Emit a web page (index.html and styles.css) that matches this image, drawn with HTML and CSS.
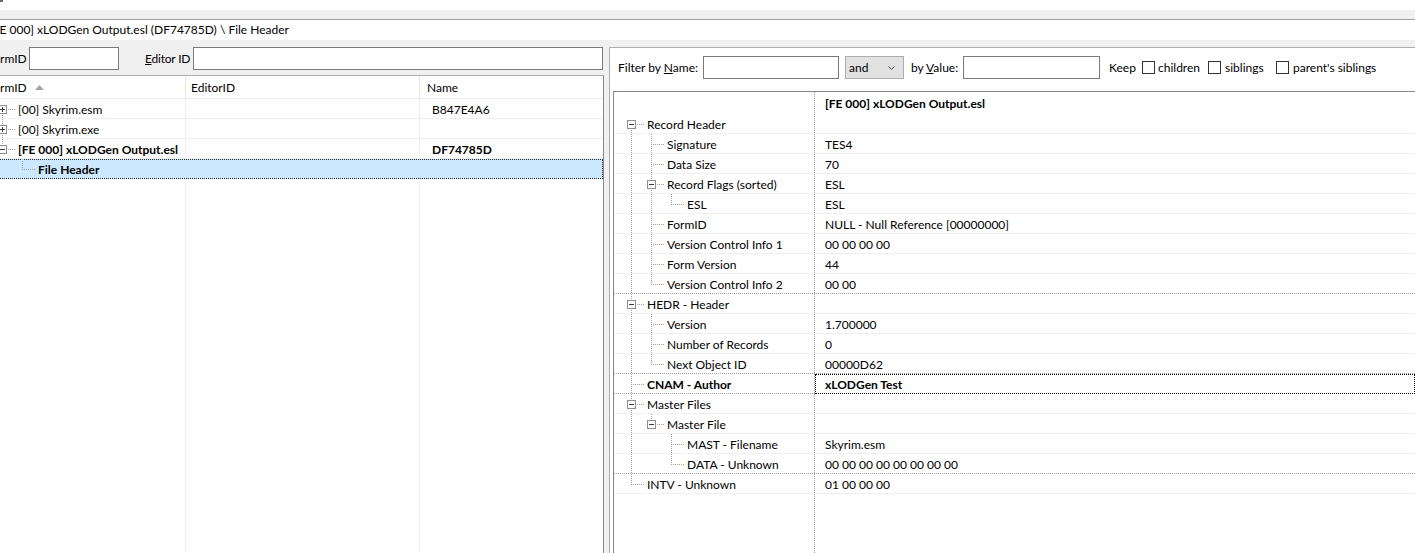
FILE: index.html
```html
<!DOCTYPE html>
<html>
<head>
<meta charset="utf-8">
<title>xEdit</title>
<link rel="stylesheet" href="styles.css">
</head>
<body>
<div class="topstrip"><span class="mark"></span></div>
<div class="band"></div>
<div class="crumb">[FE 000] xLODGen Output.esl (DF74785D) \ File Header</div>
<div class="main">
  <div class="left">
    <div class="lfilter">
      <span class="lbl lbl1"><u>F</u>ormID</span><span class="edit e-formid"></span>
      <span class="lbl lbl2"><u>E</u>ditor ID</span><span class="edit e-eid"></span>
    </div>
    <div class="ltree">
      <div class="lhead">
        <div class="h1">FormID <svg class="sort" width="9" height="5" viewBox="0 0 9 5"><polygon points="0,5 4.5,0 9,5" fill="#a6a6a6"/></svg></div>
        <div class="h2">EditorID</div>
        <div class="h3">Name</div>
      </div>
      <div class="lbody">
        <div class="lrow">
          <div class="nm"><span class="ind f"><svg class="box" width="9" height="9" viewBox="0 0 9 9"><rect x="0.5" y="0.5" width="8" height="8" fill="#fff" stroke="#8f8f8f"/><path d="M2 4.5H7M4.5 2V7" stroke="#3c3c3c"/></svg></span><span class="txt">[00] Skyrim.esm</span></div>
          <div class="c2"></div>
          <div class="c3">B847E4A6</div>
        </div>
        <div class="lrow">
          <div class="nm"><span class="ind t"><svg class="box" width="9" height="9" viewBox="0 0 9 9"><rect x="0.5" y="0.5" width="8" height="8" fill="#fff" stroke="#8f8f8f"/><path d="M2 4.5H7M4.5 2V7" stroke="#3c3c3c"/></svg></span><span class="txt">[00] Skyrim.exe</span></div>
          <div class="c2"></div>
          <div class="c3"></div>
        </div>
        <div class="lrow b">
          <div class="nm"><span class="ind l"><svg class="box" width="9" height="9" viewBox="0 0 9 9"><rect x="0.5" y="0.5" width="8" height="8" fill="#fff" stroke="#8f8f8f"/><path d="M2 4.5H7" stroke="#3c3c3c"/></svg></span><span class="txt">[FE 000] xLODGen Output.esl</span></div>
          <div class="c2"></div>
          <div class="c3">DF74785D</div>
        </div>
        <div class="lrow b sel">
          <div class="nm"><span class="ind e"></span><span class="ind l"></span><span class="txt">File Header</span></div>
          <div class="c2"></div>
          <div class="c3"></div>
        </div>
      </div>
    </div>
  </div>
  <div class="splitter"></div>
  <div class="right">
    <div class="rfilter">
      <span class="rl rl1">Filter by <u>N</u>ame:</span>
      <span class="edit e-name"></span>
      <span class="combo">and<svg class="chev" width="7" height="4" viewBox="0 0 7 4"><polyline points="0.5,0.5 3.5,3.5 6.5,0.5" fill="none" stroke="#404040"/></svg></span>
      <span class="rl rl2">by <u>V</u>alue:</span>
      <span class="edit e-value"></span>
      <span class="rl rl3">Keep</span>
      <span class="cb"></span><span class="rl rl4">children</span>
      <span class="cb"></span><span class="rl rl5">siblings</span>
      <span class="cb"></span><span class="rl rl6">parent's siblings</span>
    </div>
    <div class="rtree">
      <div class="rhead"><div class="nm"></div><div class="val">[FE 000] xLODGen Output.esl</div></div>

      <div class="row"><div class="nm"><span class="ind f"><svg class="box" width="9" height="9" viewBox="0 0 9 9"><rect x="0.5" y="0.5" width="8" height="8" fill="#fff" stroke="#8f8f8f"/><path d="M2 4.5H7" stroke="#3c3c3c"/></svg></span><span class="txt">Record Header</span></div><div class="val"></div></div>
      <div class="row"><div class="nm"><span class="ind v"></span><span class="ind t"></span><span class="txt">Signature</span></div><div class="val">TES4</div></div>
      <div class="row"><div class="nm"><span class="ind v"></span><span class="ind t"></span><span class="txt">Data Size</span></div><div class="val">70</div></div>
      <div class="row"><div class="nm"><span class="ind v"></span><span class="ind t"><svg class="box" width="9" height="9" viewBox="0 0 9 9"><rect x="0.5" y="0.5" width="8" height="8" fill="#fff" stroke="#8f8f8f"/><path d="M2 4.5H7" stroke="#3c3c3c"/></svg></span><span class="txt">Record Flags (sorted)</span></div><div class="val">ESL</div></div>
      <div class="row"><div class="nm"><span class="ind v"></span><span class="ind v"></span><span class="ind l"></span><span class="txt">ESL</span></div><div class="val">ESL</div></div>
      <div class="row"><div class="nm"><span class="ind v"></span><span class="ind t"></span><span class="txt">FormID</span></div><div class="val">NULL - Null Reference [00000000]</div></div>
      <div class="row"><div class="nm"><span class="ind v"></span><span class="ind t"></span><span class="txt">Version Control Info 1</span></div><div class="val">00 00 00 00</div></div>
      <div class="row"><div class="nm"><span class="ind v"></span><span class="ind t"></span><span class="txt">Form Version</span></div><div class="val">44</div></div>
      <div class="row dl"><div class="nm"><span class="ind v"></span><span class="ind l"></span><span class="txt">Version Control Info 2</span></div><div class="val">00 00</div></div>

      <div class="row"><div class="nm"><span class="ind t"><svg class="box" width="9" height="9" viewBox="0 0 9 9"><rect x="0.5" y="0.5" width="8" height="8" fill="#fff" stroke="#8f8f8f"/><path d="M2 4.5H7" stroke="#3c3c3c"/></svg></span><span class="txt">HEDR - Header</span></div><div class="val"></div></div>
      <div class="row"><div class="nm"><span class="ind v"></span><span class="ind t"></span><span class="txt">Version</span></div><div class="val">1.700000</div></div>
      <div class="row"><div class="nm"><span class="ind v"></span><span class="ind t"></span><span class="txt">Number of Records</span></div><div class="val">0</div></div>
      <div class="row dl"><div class="nm"><span class="ind v"></span><span class="ind l"></span><span class="txt">Next Object ID</span></div><div class="val">00000D62</div></div>

      <div class="row dl b"><div class="nm"><span class="ind t"></span><span class="txt">CNAM - Author</span></div><div class="val focus">xLODGen Test</div></div>

      <div class="row"><div class="nm"><span class="ind t"><svg class="box" width="9" height="9" viewBox="0 0 9 9"><rect x="0.5" y="0.5" width="8" height="8" fill="#fff" stroke="#8f8f8f"/><path d="M2 4.5H7" stroke="#3c3c3c"/></svg></span><span class="txt">Master Files</span></div><div class="val"></div></div>
      <div class="row"><div class="nm"><span class="ind v"></span><span class="ind l"><svg class="box" width="9" height="9" viewBox="0 0 9 9"><rect x="0.5" y="0.5" width="8" height="8" fill="#fff" stroke="#8f8f8f"/><path d="M2 4.5H7" stroke="#3c3c3c"/></svg></span><span class="txt">Master File</span></div><div class="val"></div></div>
      <div class="row"><div class="nm"><span class="ind v"></span><span class="ind e"></span><span class="ind t"></span><span class="txt">MAST - Filename</span></div><div class="val">Skyrim.esm</div></div>
      <div class="row dl"><div class="nm"><span class="ind v"></span><span class="ind e"></span><span class="ind l"></span><span class="txt">DATA - Unknown</span></div><div class="val">00 00 00 00 00 00 00 00</div></div>

      <div class="row"><div class="nm"><span class="ind l"></span><span class="txt">INTV - Unknown</span></div><div class="val">01 00 00 00</div></div>
    </div>
  </div>
</div>
</body>
</html>
```
FILE: styles.css
```css
* { box-sizing: border-box; }
html, body { margin: 0; padding: 0; }
body {
  width: 1415px;
  height: 553px;
  overflow: hidden;
  background: #fff;
  font-family: Lato, "Noto Sans", sans-serif;
  font-size: 12px;
  color: #000;
}
u { text-decoration: underline; text-underline-offset: 1px; }

.topstrip { height: 10px; background: #fff; }
.mark { display: block; width: 3px; height: 2px; background: #6a6a6a; }
.band { height: 10px; background: #f0f0f0; border-bottom: 1px solid #a0a0a0; }
.crumb {
  height: 20px;
  line-height: 19px;
  background: #fff;
  white-space: nowrap;
  text-indent: -11px;
}

.main { display: flex; height: 513px; background: #f0f0f0; }

/* left pane */
.left {
  margin-left: -20px;
  width: 624px;
  flex: none;
  display: flex;
  flex-direction: column;
}
.lfilter { height: 35px; display: flex; align-items: flex-start; padding-top: 7px; }
.lbl { height: 23px; line-height: 23px; white-space: nowrap; }
.lbl1 { width: 49px; padding-left: 7px; }
.lbl2 { width: 48px; margin-left: 26px; letter-spacing: -0.2px; }
.edit { height: 23px; background: #fff; border: 1px solid #7a7a7a; flex: none; }
.e-formid { width: 90px; }
.e-eid { width: 410px; }

.ltree {
  flex: 1;
  background: #fff;
  border-top: 1px solid #adadad;
  border-right: 1px solid #828790;
  display: flex;
  flex-direction: column;
}
.lhead { display: flex; height: 23px; border-bottom: 1px solid #ececec; }
.lhead > div { line-height: 24px; border-right: 1px solid #e5e5e5; white-space: nowrap; }
.h1 { width: 206px; padding-left: 7px; }
.h2 { width: 234px; padding-left: 5px; }
.h3 { flex: 1; padding-left: 7px; border-right: none !important; }
.sort { margin-left: 5px; vertical-align: 2px; }

.lbody {
  flex: 1;
  background-image:
    linear-gradient(#efefef, #efefef),
    linear-gradient(#efefef, #efefef);
  background-size: 1px 100%, 1px 100%;
  background-position: 205px 0, 439px 0;
  background-repeat: no-repeat;
}
.lrow {
  display: flex;
  height: 20px;
  background: linear-gradient(#f0f0f0, #f0f0f0) left bottom / 100% 1px no-repeat;
}
.lrow .nm { width: 206px; flex: none; display: flex; padding-left: 12px; }
.lrow .c2 { width: 234px; flex: none; }
.lrow .c3 { flex: 1; padding-left: 12px; line-height: 22px; }
.lrow.sel {
  background: #cce8ff;
  outline: 1px dotted #2b2b2b;
  outline-offset: -1px;
}
.b { font-weight: 700; }

/* tree guide cells */
.ind { width: 20px; flex: none; position: relative; }
.ind::before, .ind::after { content: ""; position: absolute; }
.ind::before {
  left: 10px;
  width: 1px;
  background: repeating-linear-gradient(to bottom, #a0a0a0 0 1px, transparent 1px 2px);
}
.ind::after {
  left: 10px;
  top: 10px;
  height: 1px;
  width: 13px;
  background: repeating-linear-gradient(to right, #a0a0a0 0 1px, transparent 1px 2px);
}
.ind.v::before { top: 0; bottom: 0; }
.ind.v::after { display: none; }
.ind.t::before { top: 0; bottom: 0; }
.ind.l::before { top: 0; height: 11px; }
.ind.f::before { top: 10px; bottom: 0; }
.ind.e::before, .ind.e::after { display: none; }
.box { position: absolute; left: 6px; top: 6px; z-index: 1; display: block; }
.txt { padding-left: 6px; line-height: 22px; white-space: nowrap; }

/* splitter */
.splitter { width: 5px; flex: none; background: #f0f0f0; }

/* right pane */
.right {
  flex: 1;
  min-width: 0;
  margin-top: 7px;
  background: #fff;
  border-top: 1px solid #adadad;
  border-left: 1px solid #adadad;
  padding-left: 3px;
  display: flex;
  flex-direction: column;
}
.rfilter {
  height: 43px;
  flex: none;
  display: flex;
  align-items: flex-start;
  padding-top: 8px;
  padding-left: 5px;
  white-space: nowrap;
}
.rl { height: 23px; line-height: 24px; flex: none; }
.rl1 { width: 85px; }
.e-name { width: 136px; }
.combo {
  width: 59px;
  height: 23px;
  margin-left: 6px;
  background: #e1e1e1;
  border: 1px solid #adadad;
  line-height: 22px;
  padding-left: 3px;
  position: relative;
  flex: none;
}
.chev { position: absolute; right: 8px; top: 9px; }
.rl2 { width: 52px; margin-left: 7px; }
.e-value { width: 137px; }
.rl3 { width: 33px; margin-left: 9px; }
.cb {
  width: 13px;
  height: 13px;
  margin-top: 5px;
  border: 1px solid #333;
  background: #fff;
  flex: none;
}
.rl4 { width: 50px; margin-left: 3px; }
.rl5 { width: 51px; margin-left: 4px; }
.rl6 { margin-left: 4px; }

.rtree {
  flex: 1;
  border-top: 1px solid #828790;
  border-left: 1px solid #828790;
  background-image: repeating-linear-gradient(to bottom, #a0a0a0 0 1px, transparent 1px 2px);
  background-size: 1px 100%;
  background-position: 200px 0;
  background-repeat: no-repeat;
}
.rhead { display: flex; height: 22px; font-weight: 700; }
.rhead .nm { width: 200px; flex: none; }
.rhead .val { padding-left: 11px; line-height: 23px; white-space: nowrap; }
.row {
  display: flex;
  height: 20px;
  background: linear-gradient(#f0f0f0, #f0f0f0) left bottom / 100% 1px no-repeat;
}
.row.dl {
  background: repeating-linear-gradient(to right, #a0a0a0 0 1px, transparent 1px 2px) left bottom / 100% 1px no-repeat;
}
.row .nm { width: 200px; flex: none; display: flex; padding-left: 7px; }
.row .val { flex: 1; padding-left: 11px; line-height: 22px; white-space: nowrap; }
.row .val.focus { outline: 1px dotted #000; outline-offset: -1px; margin-left: 1px; padding-left: 10px; }
```
